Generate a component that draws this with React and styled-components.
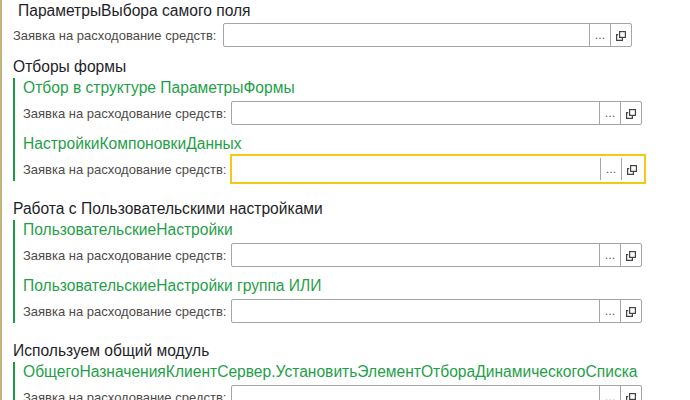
import React from "react";
import styled, { createGlobalStyle } from "styled-components";

const Global = createGlobalStyle`
  html, body { margin: 0; padding: 0; background: #fff; }
  body { font-family: "Liberation Sans", Arial, sans-serif; }
`;

const Page = styled.div`
  width: 690px;
  height: 400px;
  box-sizing: border-box;
  overflow: hidden;
  border-left: 2px solid #c2b47c;
  padding: 1px 0 0 11px;
  display: flex;
  flex-direction: column;
`;

const SectionTitle = styled.div`
  font-size: 15.6px;
  line-height: 20px;
  height: 20px;
  color: #1e1e28;
  white-space: nowrap;
  margin-top: ${(p) => p.$mt || 0}px;
  padding-left: ${(p) => p.$indent || 0}px;
`;

const Group = styled.div`
  margin-top: 1px;
  border-left: 2px solid #1b9a45;
  padding-left: 8px;
  display: flex;
  flex-direction: column;
`;

const Item = styled.div`
  display: flex;
  flex-direction: column;
  & + & { margin-top: 9px; }
`;

const GroupTitle = styled.div`
  font-size: 15.6px;
  line-height: 20px;
  height: 20px;
  color: #1f9f48;
  white-space: nowrap;
`;

const Row = styled.div`
  display: flex;
  align-items: center;
  height: 24px;
  margin-top: ${(p) => p.$mt || 0}px;
`;

const Label = styled.div`
  width: ${(p) => p.$w}px;
  flex: none;
  font-size: 13px;
  color: #4e4a48;
  white-space: nowrap;
`;

const Field = styled.div`
  flex: none;
  box-sizing: border-box;
  display: flex;
  align-items: stretch;
  background: #fff;
  width: ${(p) => (p.$focused ? p.$w + 5 : p.$w)}px;
  height: ${(p) => (p.$focused ? 30 : 24)}px;
  margin: ${(p) => (p.$focused ? "-3px 0 -3px -1px" : "0")};
  padding-right: ${(p) => (p.$focused ? 2 : 0)}px;
  border: ${(p) => (p.$focused ? "2px solid #f6c814" : "1px solid #a5a5a5")};
  border-radius: ${(p) => (p.$focused ? 0 : 2)}px;
`;

const Input = styled.div`
  flex: 1;
`;

const Btn = styled.div`
  flex: none;
  width: 20px;
  border-left: 1px solid #a5a5a5;
  margin: ${(p) => (p.$focused ? "2px 0" : "0")};
  display: flex;
  align-items: center;
  justify-content: center;
  color: #555;
  font-size: 11px;
  font-family: "DejaVu Sans", sans-serif;
`;

const CopyIcon = () => (
  <svg width="10" height="10" viewBox="0 0 10 10" style={{ marginTop: 1 }}>
    <rect x="3.6" y="0.6" width="5.8" height="5.8" fill="none" stroke="#444" strokeWidth="1.2" />
    <path d="M2.2 3.6 H0.6 V9.4 H6.4 V7" fill="none" stroke="#444" strokeWidth="1.2" />
  </svg>
);

const LABEL = "Заявка на расходование средств:";

const InputRow = ({ labelWidth, fieldWidth, focused, mt }) => (
  <Row $mt={mt}>
    <Label $w={labelWidth}>{LABEL}</Label>
    <Field $w={fieldWidth} $focused={focused}>
      <Input />
      <Btn $focused={focused}>...</Btn>
      <Btn $focused={focused}>
        <CopyIcon />
      </Btn>
    </Field>
  </Row>
);

const GroupItem = ({ title, focused }) => (
  <Item>
    <GroupTitle>{title}</GroupTitle>
    <InputRow labelWidth={208} fieldWidth={411} focused={focused} mt={3} />
  </Item>
);

export default function App() {
  return (
    <>
      <Global />
      <Page>
        <SectionTitle $indent={5}>ПараметрыВыбора самого поля</SectionTitle>
        <InputRow labelWidth={210} fieldWidth={409} mt={2} />

        <SectionTitle $mt={10}>Отборы формы</SectionTitle>
        <Group>
          <GroupItem title="Отбор в структуре ПараметрыФормы" />
          <GroupItem title="НастройкиКомпоновкиДанных" focused />
        </Group>

        <SectionTitle $mt={18}>Работа с Пользовательскими настройками</SectionTitle>
        <Group>
          <GroupItem title="ПользовательскиеНастройки" />
          <GroupItem title="ПользовательскиеНастройки группа ИЛИ" />
        </Group>

        <SectionTitle $mt={18}>Используем общий модуль</SectionTitle>
        <Group>
          <GroupItem title="ОбщегоНазначенияКлиентСервер.УстановитьЭлементОтбораДинамическогоСписка" />
        </Group>
      </Page>
    </>
  );
}
